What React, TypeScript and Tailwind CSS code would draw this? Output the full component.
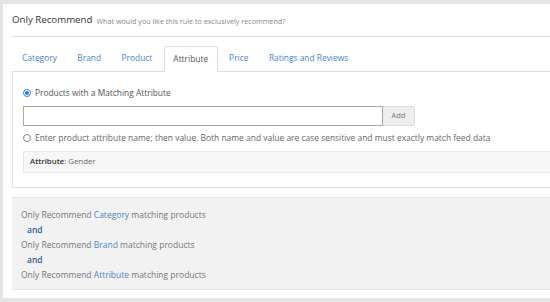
const tabs = ["Category", "Brand", "Product", "Attribute", "Price", "Ratings and Reviews"];

const font = { fontFamily: '"Open Sans", "Liberation Sans", sans-serif' };

export default function App() {
  return (
    <div className="w-[550px] h-[302px] overflow-hidden bg-[#e5e5e5] pt-[4px] pl-[3px] pb-[4px]" style={font}>
      <div className="w-[600px] h-full bg-white pl-[9px]">
        <div className="h-[33px] flex items-center gap-[4px] border-b border-[#e3e3e3] pt-[1px]">
          <span className="text-[9.7px] text-[#333]">Only Recommend</span>
          <span className="text-[7.2px] text-[#888] pt-[1px]">What would you like this rule to exclusively recommend?</span>
        </div>

        <div className="mt-[9px]">
          <div className="flex items-end pl-[1px] border-b border-[#dddddd] h-[26px]">
            {tabs.map((t) => (
              <div
                key={t}
                className={
                  t === "Attribute"
                    ? "h-[26px] -mb-[1px] px-[8.5px] mr-[2.5px] flex items-center bg-white border border-[#dddddd] border-b-white rounded-t-[3px] text-[8.4px] text-[#555]"
                    : "h-[25px] px-[9px] mr-[2.5px] flex items-center text-[8.4px] text-[#4a86c4]"
                }
              >
                {t}
              </div>
            ))}
          </div>

          <div className="border-l border-b border-[#e3e3e3] h-[116px] pl-[10px] pt-[15px]">
            <label className="flex items-center gap-[4px] h-[12px] text-[8.4px] text-[#555]">
              <span className="w-[8px] h-[8px] rounded-full border border-[#3b82e0] flex items-center justify-center">
                <span className="w-[4px] h-[4px] rounded-full bg-[#2f7de1]" />
              </span>
              Products with a Matching Attribute
            </label>
            <div className="flex mt-[7px] h-[20px]">
              <div className="w-[360px] border border-[#a9a9a9] bg-white" />
              <div className="w-[32px] border border-l-0 border-[#dcdcdc] bg-[#eeeeee] rounded-r-[3px] flex items-center justify-center text-[7.5px] text-[#777]">
                Add
              </div>
            </div>
            <label className="flex items-center gap-[4px] h-[12px] mt-[6px] text-[8.45px] text-[#666]">
              <span className="w-[8px] h-[8px] rounded-full border border-[#888]" />
              Enter product attribute name; then value. Both name and value are case sensitive and must exactly match feed data
            </label>
            <div className="mt-[7px] h-[22px] flex items-center pl-[6px] bg-[#f7f7f7] border border-[#e6e6e6] text-[7.8px] text-[#666]">
              <span className="font-semibold text-[#333]">Attribute</span>: Gender
            </div>
          </div>
        </div>

        <div className="mt-[9px] h-[93px] bg-[#f2f2f2] border-t border-b border-[#e6e6e6] pl-[9px] pt-[9px] text-[8.5px] text-[#777] leading-[15px]">
          <div>
            Only Recommend <span className="text-[#4a86c4]">Category</span> matching products
          </div>
          <div className="pl-[6px] font-semibold text-[#2e5f95]">and</div>
          <div>
            Only Recommend <span className="text-[#4a86c4]">Brand</span> matching products
          </div>
          <div className="pl-[6px] font-semibold text-[#2e5f95]">and</div>
          <div>
            Only Recommend <span className="text-[#4a86c4]">Attribute</span> matching products
          </div>
        </div>
      </div>
    </div>
  );
}
